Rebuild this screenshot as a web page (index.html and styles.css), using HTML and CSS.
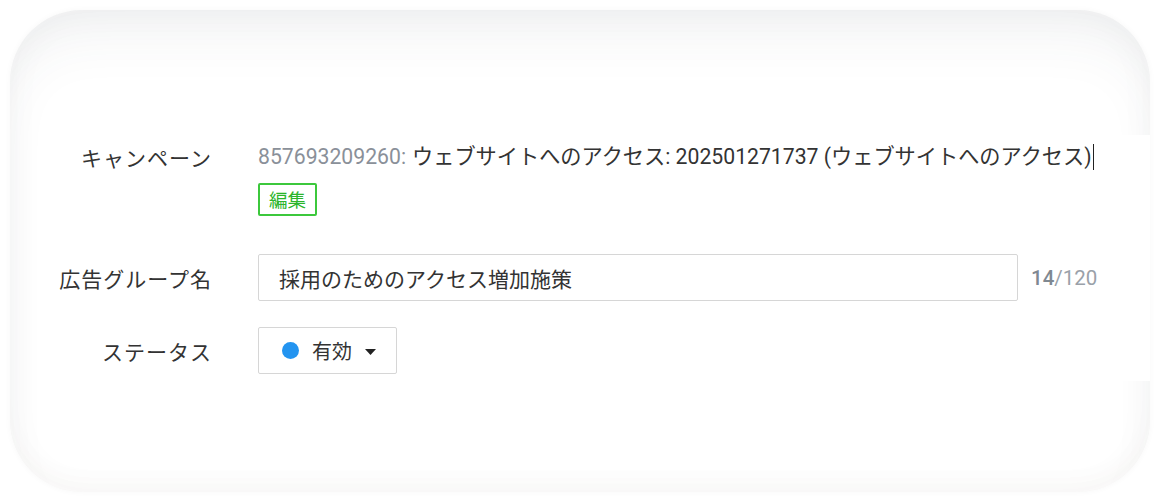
FILE: index.html
```html
<!DOCTYPE html>
<html lang="ja">
<head>
<meta charset="utf-8">
<link rel="stylesheet" href="styles.css">
</head>
<body>
<div class="card">
  <div class="panel">
    <div class="row row-campaign">
      <div class="label">キャンペーン</div>
      <div class="field">
        <div class="campaign-text"><span class="cid">857693209260:</span> ウェブサイトへのアクセス: 202501271737 (ウェブサイトへのアクセス)<span class="caret-line"></span></div>
        <button class="edit-btn" type="button">編集</button>
      </div>
    </div>
    <div class="row row-name">
      <div class="label">広告グループ名</div>
      <div class="field field-inline">
        <div class="text-input">採用のためのアクセス増加施策</div>
        <div class="counter"><span class="count-cur">14</span>/120</div>
      </div>
    </div>
    <div class="row row-status">
      <div class="label">ステータス</div>
      <div class="field">
        <div class="select">
          <span class="dot"></span>
          <span class="select-text">有効</span>
          <svg class="tri" width="11" height="6" viewBox="0 0 11 6"><path d="M0 0h11L5.5 6z" fill="#222"/></svg>
        </div>
      </div>
    </div>
  </div>
</div>
</body>
</html>
```

FILE: styles.css
```css
html, body {
  margin: 0;
  padding: 0;
  background: #ffffff;
}
body {
  width: 1160px;
  height: 502px;
  overflow: hidden;
  font-family: "Roboto", "Noto Sans CJK JP", sans-serif;
  color: #333333;
}
.card {
  margin: 10px;
  width: 1140px;
  height: 482px;
  box-sizing: border-box;
  border-radius: 72px;
  background: #ffffff;
  box-shadow:
    inset 0 40px 60px -20px rgba(60, 70, 80, 0.075),
    inset 0 0 36px rgba(60, 60, 60, 0.035),
    inset 0 -14px 30px -10px rgba(120, 100, 60, 0.03),
    0 0 6px rgba(0, 0, 0, 0.035);
  padding-top: 125px;
  padding-left: 30px;
  overflow: hidden;
}
.panel {
  background: #ffffff;
  height: 246px;
  box-sizing: border-box;
  padding-top: 8px;
  display: flex;
  flex-direction: column;
}
.row {
  display: flex;
  align-items: center;
}
.row-campaign {
  align-items: flex-start;
}
.row-name {
  margin-top: 38px;
}
.row-status {
  margin-top: 26px;
}
.label {
  width: 172px;
  flex: none;
  text-align: right;
  font-size: 21px;
  letter-spacing: 1px;
  line-height: 28px;
  color: #333333;
  font-family: "Noto Sans CJK JP", sans-serif;
  margin-right: 46px;
}
.field {
  display: flex;
  flex-direction: column;
  align-items: flex-start;
}
.field-inline {
  flex-direction: row;
  align-items: center;
}
.campaign-text {
  font-size: 21.2px;
  line-height: 28px;
  color: #333333;
  white-space: nowrap;
  display: flex;
  align-items: center;
}
.cid {
  color: #8a9099;
  margin-right: 6px;
}
.caret-line {
  display: inline-block;
  width: 1.5px;
  height: 26px;
  background: #222;
  margin-left: 1px;
}
.edit-btn {
  margin-top: 12px;
  height: 33px;
  width: 59px;
  box-sizing: border-box;
  border: 2px solid #3cc83c;
  border-radius: 2px;
  background: #ffffff;
  color: #2bb52b;
  font-family: "Noto Sans CJK JP", sans-serif;
  font-size: 18.5px;
  line-height: 1;
  padding: 0;
  display: flex;
  align-items: center;
  justify-content: center;
}
.text-input {
  width: 760px;
  height: 47px;
  box-sizing: border-box;
  border: 1px solid #d6d6d6;
  border-radius: 2px;
  padding-left: 20px;
  display: flex;
  align-items: center;
  font-size: 21px;
  color: #333333;
  font-family: "Noto Sans CJK JP", sans-serif;
}
.counter {
  margin-left: 13px;
  font-size: 20.5px;
  color: #9aa1a9;
}
.count-cur {
  color: #7f8891;
  font-weight: 500;
}
.select {
  width: 139px;
  height: 47px;
  box-sizing: border-box;
  border: 1px solid #d6d6d6;
  border-radius: 2px;
  display: flex;
  align-items: center;
  padding-left: 23px;
}
.dot {
  width: 17px;
  height: 17px;
  border-radius: 50%;
  background: #2394f0;
  flex: none;
}
.select-text {
  margin-left: 13px;
  font-size: 20px;
  font-family: "Noto Sans CJK JP", sans-serif;
  color: #333333;
}
.tri {
  margin-left: 13px;
  margin-top: 2px;
}
```
